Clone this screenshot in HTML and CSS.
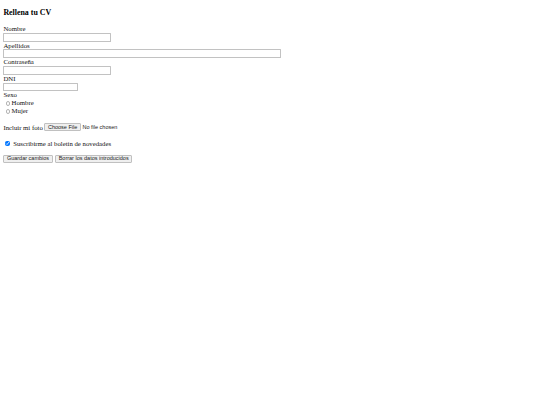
FILE: index.html
```html
<!DOCTYPE html>
<html lang="es">
<head>
<meta charset="utf-8">
<title>Rellena tu CV</title>
<link rel="stylesheet" href="styles.css">
</head>
<body>
<h3 class="title">Rellena tu CV</h3>
<form class="cv-form">
  <label class="field-label" for="nombre">Nombre</label>
  <input class="text-input text-input--medium" type="text" id="nombre">
  <label class="field-label" for="apellidos">Apellidos</label>
  <input class="text-input text-input--wide" type="text" id="apellidos">
  <label class="field-label" for="pass">Contraseña</label>
  <input class="text-input text-input--medium" type="password" id="pass">
  <label class="field-label" for="dni">DNI</label>
  <input class="text-input text-input--short" type="text" id="dni">
  <div class="field-label">Sexo</div>
  <label class="radio-row"><input class="radio" type="radio" name="sexo"><span>Hombre</span></label>
  <label class="radio-row"><input class="radio" type="radio" name="sexo"><span>Mujer</span></label>
  <div class="file-row"><span class="file-label">Incluir mi foto</span><input class="file-input" type="file"></div>
  <label class="check-row"><input class="checkbox" type="checkbox" checked><span>Suscribirme al boletín de novedades</span></label>
  <div class="actions">
    <button class="btn" type="button">Guardar cambios</button>
    <button class="btn" type="reset">Borrar los datos introducidos</button>
  </div>
</form>
</body>
</html>
```
FILE: styles.css
```css
html, body {
  background: #ffffff;
}
body {
  margin: 0;
  padding: 0 3.4px;
  font-family: "Liberation Serif", "Times New Roman", serif;
  font-size: 6.75px;
  color: #000;
}
.title {
  margin: 8px 0 7.9px;
  font-size: 7.9px;
  line-height: 9.2px;
  font-weight: bold;
}
.cv-form {
  display: flex;
  flex-direction: column;
  align-items: flex-start;
}
.field-label {
  line-height: 7.8px;
  height: 7.8px;
  color: #111;
}
.text-input {
  box-sizing: border-box;
  height: 8.8px;
  margin: 0;
  padding: 0 1px;
  border: 1px solid #c2c2c2;
  border-radius: 0.5px;
  background: #fff;
  font-family: "Liberation Sans", Arial, sans-serif;
  font-size: 5.5px;
}
.text-input--medium { width: 107.7px; }
.text-input--wide { width: 277.4px; }
.text-input--short { width: 74.4px; }
.radio-row {
  display: flex;
  align-items: center;
  height: 8px;
  line-height: 8px;
  color: #111;
}
.radio {
  appearance: none;
  box-sizing: border-box;
  width: 4.8px;
  height: 4.8px;
  margin: 0 1.1px 0 2.3px;
  border: 1px solid #b4b4b4;
  border-radius: 50%;
  background: #fff;
}
.file-row {
  display: flex;
  align-items: center;
  height: 9.5px;
  margin-top: 7px;
  color: #111;
}
.file-label {
  margin-right: 1.7px;
}
.file-input {
  font-family: "Liberation Sans", Arial, sans-serif;
  font-size: 5.5px;
  color: #222;
}
.file-input::file-selector-button {
  box-sizing: border-box;
  height: 7.6px;
  margin: 0 1.7px 0 0;
  padding: 0 2.5px;
  border: 1px solid #c0c0c0;
  border-radius: 1px;
  background: #efefef;
  font-family: "Liberation Sans", Arial, sans-serif;
  font-size: 5.5px;
  color: #222;
}
.check-row {
  display: flex;
  align-items: center;
  height: 7.8px;
  margin-top: 7.5px;
  color: #111;
}
.checkbox {
  width: 5.2px;
  height: 5.2px;
  margin: 0 3px 0 1.6px;
}
.actions {
  display: flex;
  gap: 2.6px;
  margin-top: 8.4px;
}
.btn {
  box-sizing: border-box;
  height: 7.6px;
  margin: 0;
  padding: 0 2.5px;
  border: 1px solid #c0c0c0;
  border-radius: 1px;
  background: #efefef;
  font-family: "Liberation Sans", Arial, sans-serif;
  font-size: 5.5px;
  line-height: 5.6px;
  color: #222;
}
```
